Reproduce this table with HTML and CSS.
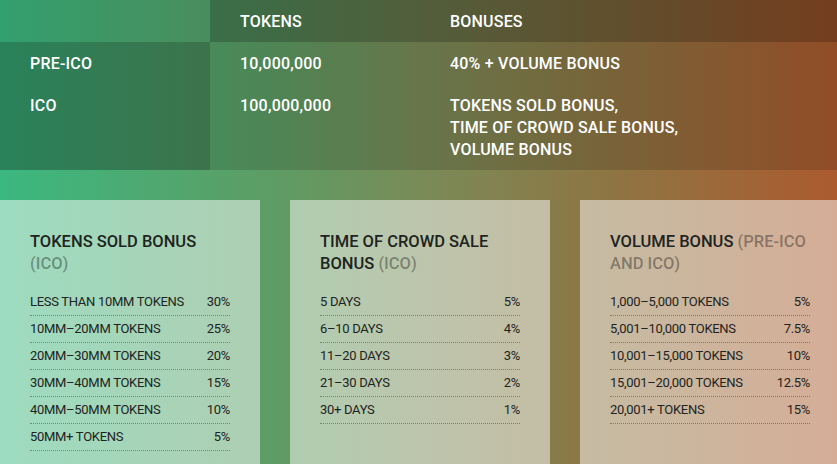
FILE: index.html
```html
<!DOCTYPE html>
<html lang="en">
<head>
<meta charset="utf-8">
<title>Token sale</title>
<link rel="stylesheet" href="styles.css">
</head>
<body>
<div class="page">
  <div class="sale">
    <div class="cell head first"></div>
    <div class="cell head">TOKENS</div>
    <div class="cell head">BONUSES</div>

    <div class="cell first">PRE-ICO</div>
    <div class="cell">10,000,000</div>
    <div class="cell">40% + VOLUME BONUS</div>

    <div class="cell first">ICO</div>
    <div class="cell">100,000,000</div>
    <div class="cell">TOKENS SOLD BONUS,<br>TIME OF CROWD SALE BONUS,<br>VOLUME BONUS</div>
  </div>

  <div class="cards">
    <div class="card">
      <h3 class="card-title">TOKENS SOLD BONUS <span class="muted">(ICO)</span></h3>
      <ul class="rates">
        <li><span>LESS THAN 10MM TOKENS</span><span>30%</span></li>
        <li><span>10MM–20MM TOKENS</span><span>25%</span></li>
        <li><span>20MM–30MM TOKENS</span><span>20%</span></li>
        <li><span>30MM–40MM TOKENS</span><span>15%</span></li>
        <li><span>40MM–50MM TOKENS</span><span>10%</span></li>
        <li><span>50MM+ TOKENS</span><span>5%</span></li>
      </ul>
    </div>
    <div class="card">
      <h3 class="card-title">TIME OF CROWD SALE BONUS <span class="muted">(ICO)</span></h3>
      <ul class="rates">
        <li><span>5 DAYS</span><span>5%</span></li>
        <li><span>6–10 DAYS</span><span>4%</span></li>
        <li><span>11–20 DAYS</span><span>3%</span></li>
        <li><span>21–30 DAYS</span><span>2%</span></li>
        <li><span>30+ DAYS</span><span>1%</span></li>
      </ul>
    </div>
    <div class="card">
      <h3 class="card-title">VOLUME BONUS <span class="muted">(PRE-ICO AND ICO)</span></h3>
      <ul class="rates">
        <li><span>1,000–5,000 TOKENS</span><span>5%</span></li>
        <li><span>5,001–10,000 TOKENS</span><span>7.5%</span></li>
        <li><span>10,001–15,000 TOKENS</span><span>10%</span></li>
        <li><span>15,001–20,000 TOKENS</span><span>12.5%</span></li>
        <li><span>20,001+ TOKENS</span><span>15%</span></li>
      </ul>
    </div>
  </div>
</div>
</body>
</html>
```
FILE: styles.css
```css
html, body {
  margin: 0;
  padding: 0;
}
body {
  font-family: Roboto, "Noto Sans", sans-serif;
  overflow: hidden;
}
.page {
  width: 860px;
  min-height: 520px;
  background: linear-gradient(90deg, #3bb880 0%, #5e9c64 32%, #7b8a57 50%, #8b7846 68%, #ae582c 100%);
}
.sale {
  display: grid;
  grid-template-columns: 210px 210px 1fr;
  color: #fff;
  font-size: 16px;
  font-weight: 500;
  line-height: 22px;
  letter-spacing: 0.2px;
}
.cell {
  padding: 11px 30px 9px;
  background: rgba(0, 0, 0, 0.15);
}
.cell.head {
  background: rgba(0, 0, 0, 0.32);
}
.cell.head.first {
  background: rgba(0, 0, 0, 0.13);
}
.cell.first {
  background: rgba(0, 0, 0, 0.29);
}
.cards {
  display: flex;
  gap: 30px;
  padding-top: 30px;
}
.card {
  flex: 0 0 260px;
  box-sizing: border-box;
  padding: 31px 30px 30px;
  background: rgba(255, 255, 255, 0.5);
  color: #1e2421;
}
.card-title {
  margin: 0;
  font-size: 16.5px;
  font-weight: 500;
  line-height: 22px;
}
.muted {
  color: rgba(0, 0, 0, 0.36);
}
.rates {
  list-style: none;
  margin: 14px 0 0;
  padding: 0;
  font-size: 13px;
  line-height: 18px;
  letter-spacing: -0.3px;
}
.rates li {
  display: flex;
  justify-content: space-between;
  padding: 4px 0;
  white-space: nowrap;
  border-bottom: 1px dotted rgba(0, 0, 0, 0.35);
}
```
